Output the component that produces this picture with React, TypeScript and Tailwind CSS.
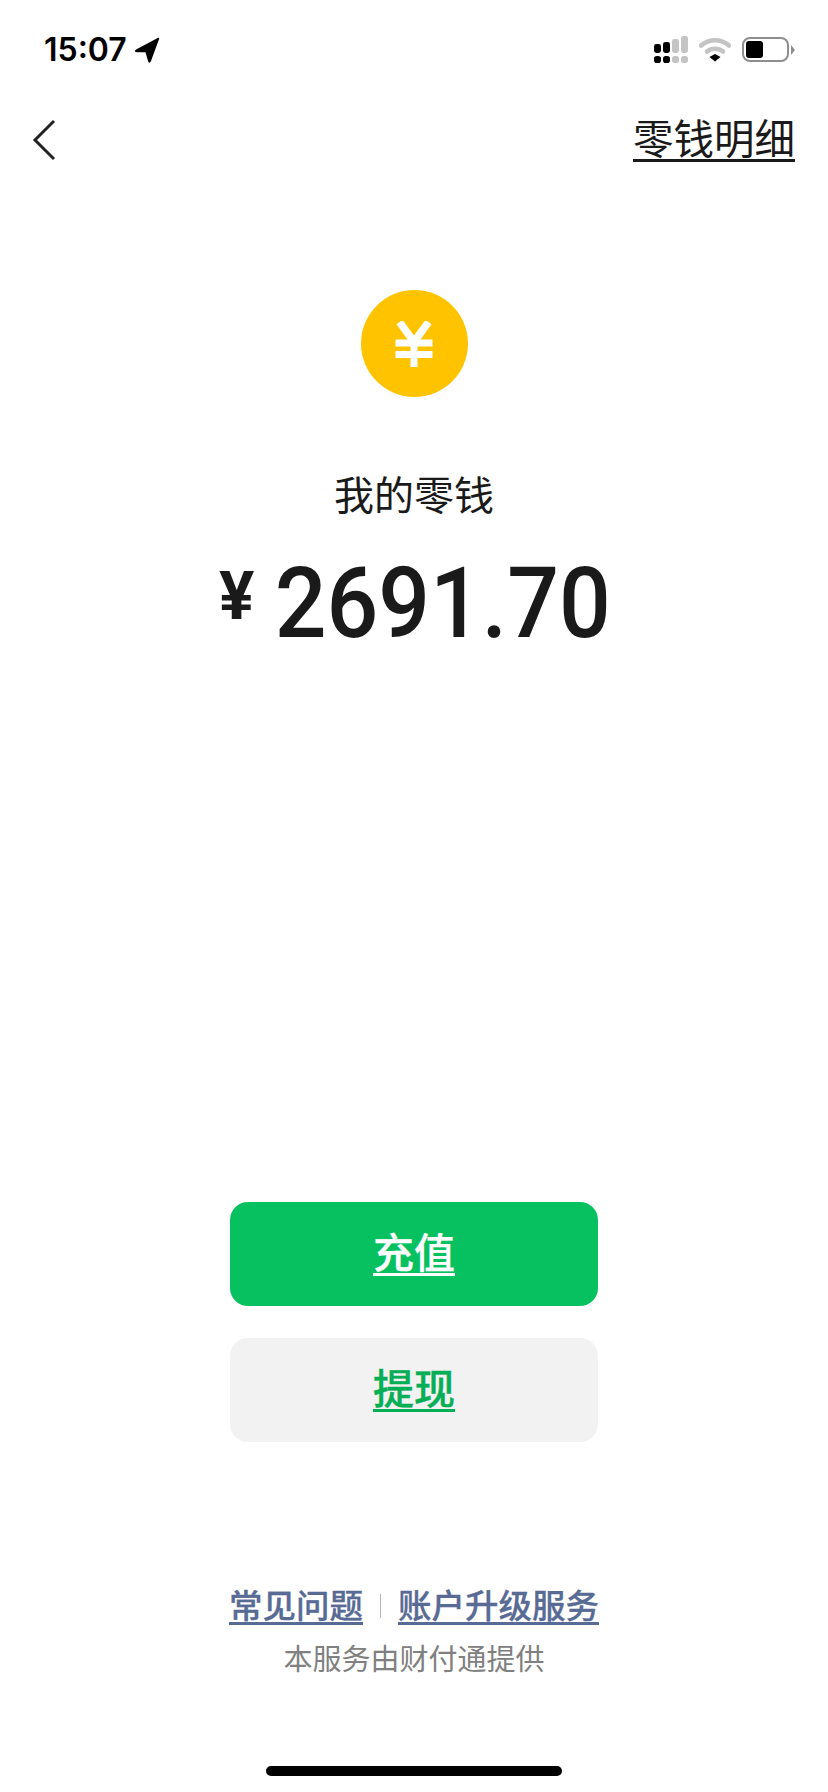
import React from "react";

const CJK = "font-['Inter','Noto_Sans_CJK_SC',sans-serif]";

function Signal() {
  const dark = "#000";
  const grey = "#c4c4c4";
  return (
    <svg width="34" height="27" viewBox="0 0 34 27">
      <rect x="0" y="8" width="7" height="9" rx="2.4" fill={dark} />
      <rect x="9" y="6" width="7" height="11" rx="2.4" fill={dark} />
      <rect x="18" y="3" width="7" height="14" rx="2.4" fill={grey} />
      <rect x="27" y="0" width="7" height="17" rx="2.4" fill={grey} />
      <rect x="0" y="20" width="7" height="7" rx="2.8" fill={dark} />
      <rect x="9" y="20" width="7" height="7" rx="2.8" fill={dark} />
      <rect x="18" y="20" width="7" height="7" rx="2.8" fill={grey} />
      <rect x="27" y="20" width="7" height="7" rx="2.8" fill={grey} />
    </svg>
  );
}

function Wifi() {
  return (
    <svg width="32" height="25" viewBox="0 0 32 25">
      <path d="M2 8.5C10 1.5 22 1.5 30 8.5" fill="none" stroke="#c4c4c4" strokeWidth="4.5" strokeLinecap="round" />
      <path d="M8 14.5C12.5 10.8 19.5 10.8 24 14.5" fill="none" stroke="#c4c4c4" strokeWidth="4.5" strokeLinecap="round" />
      <path d="M16 17L21.5 20L16 24.5L10.5 20Z" fill="#000" />
    </svg>
  );
}

function Battery() {
  return (
    <div className="flex items-center">
      <div className="w-[47px] h-[25px] rounded-[8px] border-2 border-[#8e8e8e] p-[2px]">
        <div className="w-[17px] h-[17px] rounded-[3px] bg-black" />
      </div>
      <div className="ml-[2px] w-0 h-0 border-y-[5px] border-y-transparent border-l-[4px] border-l-[#8e8e8e]" />
    </div>
  );
}

function YenMark() {
  return (
    <svg width="38" height="46" viewBox="0 0 38 46">
      <path d="M4.5 1L19 21L33.5 1" fill="none" stroke="#fff" strokeWidth="7.5" />
      <path d="M0.5 22H37.5M0.5 33.5H37.5M19 19V46" fill="none" stroke="#fff" strokeWidth="7" />
    </svg>
  );
}

export default function App() {
  return (
    <div className={`${CJK} relative flex flex-col w-[828px] h-[1792px] bg-white text-[#1a1a1a] overflow-hidden`}>
      <div className="flex items-start justify-between pt-[36px] pl-[44px] pr-[33px] h-[100px]">
        <div className="flex items-center gap-[7px] h-[28px]">
          <span className="font-['Inter',sans-serif] text-[32px] leading-[28px] font-semibold text-black">15:07</span>
          <svg width="26" height="26" viewBox="0 0 26 26">
            <path d="M24.5 1.5L2 13.5Q1 14.5 3 14.5L12 14.5L15 24.5Q15.5 25.5 16.2 24Z" fill="#000" stroke="#000" strokeWidth="1.5" strokeLinejoin="round" />
          </svg>
        </div>
        <div className="flex items-center gap-[11px]">
          <Signal />
          <Wifi />
          <Battery />
        </div>
      </div>

      <div className="flex items-center justify-between pl-[32px] pr-[33px] h-[80px]">
        <svg width="24" height="42" viewBox="0 0 24 42">
          <path d="M22 2L3 21L22 40" fill="none" stroke="#222" strokeWidth="3" />
        </svg>
        <a className="text-[40.5px] leading-[44px] underline decoration-[3px] underline-offset-[5px]">零钱明细</a>
      </div>

      <div className="flex flex-col items-center mt-[110px]">
        <div className="flex items-center justify-center w-[107px] h-[107px] rounded-full bg-[#ffc300]">
          <YenMark />
        </div>
        <div className="mt-[71px] text-[40px] leading-[56px]">我的零钱</div>
        <div className="flex items-start mt-[25px] ml-[3px] h-[110px] font-['Roboto',sans-serif] font-medium">
          <span className="text-[66px] leading-[72px] font-bold mr-[20px] mt-[12px]">¥</span>
          <span className="text-[98px] leading-[110px] -mx-[12px] scale-x-[0.93]">2691.70</span>
        </div>
      </div>

      <div className="flex flex-col items-center gap-[32px] mt-[543px]">
        <a className="flex items-center justify-center w-[368px] h-[104px] rounded-[18px] bg-[#07c160] text-white text-[41px] font-medium [-webkit-text-stroke:0.25px_#fff] underline decoration-[3px] underline-offset-[5px]">充值</a>
        <a className="flex items-center justify-center w-[368px] h-[104px] rounded-[18px] bg-[#f2f2f2] text-[#06ae56] text-[41px] font-medium [-webkit-text-stroke:0.4px_#06ae56] underline decoration-[3px] underline-offset-[5px]">提现</a>
      </div>

      <div className="flex flex-col items-center mt-[140px]">
        <div className="flex items-center h-[48px] text-[#576b95] text-[33.5px] font-medium [-webkit-text-stroke:0.3px_#576b95]">
          <a className="underline decoration-[3px] underline-offset-[4px]">常见问题</a>
          <span className="mx-[17px] w-px h-[24px] bg-[#b5b5b5]" />
          <a className="underline decoration-[3px] underline-offset-[4px]">账户升级服务</a>
        </div>
        <div className="mt-[10px] text-[29px] leading-[40px] text-[#808080]">本服务由财付通提供</div>
      </div>

      <div className="absolute left-[266px] bottom-[16px] w-[296px] h-[10px] rounded-full bg-black" />
    </div>
  );
}
